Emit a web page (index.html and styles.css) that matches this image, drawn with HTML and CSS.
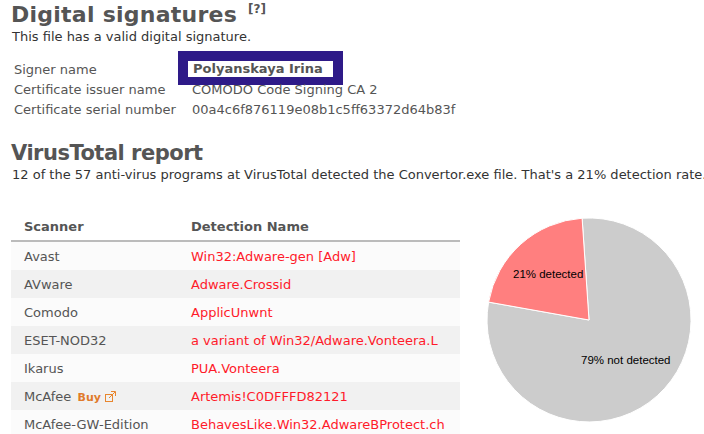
FILE: index.html
```html
<!DOCTYPE html>
<html lang="en">
<head>
    <meta charset="UTF-8">
    <title>Convertor.exe - Digital signatures</title>
    <link rel="stylesheet" href="styles.css">
</head>
<body>
    <div class="page">
        <h2 class="ds">Digital signatures <sup>[?]</sup></h2>
        <p class="lead">This file has a valid digital signature.</p>
        <table class="sig">
            <tr>
                <td class="label">Signer name</td>
                <td><span class="mark"><b>Polyanskaya Irina</b></span></td>
            </tr>
            <tr>
                <td class="label">Certificate issuer name</td>
                <td>COMODO Code Signing CA 2</td>
            </tr>
            <tr>
                <td class="label">Certificate serial number</td>
                <td>00a4c6f876119e08b1c5ff63372d64b83f</td>
            </tr>
        </table>

        <h2 class="vt">VirusTotal report</h2>
        <p class="lead nowrap">12 of the 57 anti-virus programs at VirusTotal detected the Convertor.exe file. That's a 21% detection rate.</p>

        <div class="report">
            <table class="scan">
                <thead>
                    <tr><th class="c1">Scanner</th><th>Detection Name</th></tr>
                </thead>
                <tbody>
                    <tr><td class="c1">Avast</td><td class="hit">Win32:Adware-gen [Adw]</td></tr>
                    <tr><td class="c1">AVware</td><td class="hit">Adware.Crossid</td></tr>
                    <tr><td class="c1">Comodo</td><td class="hit">ApplicUnwnt</td></tr>
                    <tr><td class="c1">ESET-NOD32</td><td class="hit">a variant of Win32/Adware.Vonteera.L</td></tr>
                    <tr><td class="c1">Ikarus</td><td class="hit">PUA.Vonteera</td></tr>
                    <tr>
                        <td class="c1">McAfee <a class="buy" href="#">Buy
                            <svg width="11" height="11" viewBox="0 0 11 11"><rect x="0.5" y="3.5" width="7" height="7" fill="none" stroke="#e8862e"/><path d="M4 7 L10 1 M6 0.5 H10.5 V5" fill="none" stroke="#e8862e"/></svg></a></td>
                        <td class="hit">Artemis!C0DFFFD82121</td>
                    </tr>
                    <tr><td class="c1">McAfee-GW-Edition</td><td class="hit">BehavesLike.Win32.AdwareBProtect.ch</td></tr>
                </tbody>
            </table>

            <svg class="pie" width="234" height="224" viewBox="0 0 234 224">
                <path d="M119,110 L112.1,8.2 A102,102 0 1,1 18.6,92.1 Z" fill="#cccccc" stroke="#ffffff" stroke-width="1"/>
                <path d="M119,110 L112.1,8.2 A102,102 0 0,0 18.6,92.1 Z" fill="#ff7f7f" stroke="#ffffff" stroke-width="1"/>
                <text x="43" y="68">21% detected</text>
                <text x="111" y="154">79% not detected</text>
            </svg>
        </div>
    </div>
</body>
</html>
```

FILE: styles.css
```css
html, body {
    margin: 0;
    overflow: hidden;
}
body {
    font-family: "DejaVu Sans", Verdana, sans-serif;
    font-size: 13px;
    color: #444;
    background: #fff;
}
.page {
    padding: 3px 0 0 11px;
}
h2 {
    font-size: 22px;
    line-height: 24px;
    color: #555;
    margin: 0;
}
.ds {
    letter-spacing: 0.25px;
}
h2 sup {
    font-size: 12px;
    line-height: 0;
    vertical-align: 9px;
    letter-spacing: 0;
    margin-left: 3px;
}
.lead {
    margin: 1px 0 0 1px;
    line-height: 18px;
    color: #333;
}
.nowrap {
    white-space: nowrap;
}
.sig {
    border-collapse: collapse;
    margin-top: 13px;
    color: #555;
}
.sig td {
    padding: 0;
    height: 20px;
}
.sig .label {
    width: 178px;
    padding-left: 3px;
}
.mark {
    display: inline-block;
    vertical-align: middle;
    box-sizing: border-box;
    width: 165px;
    height: 34px;
    border: 10px solid #2e1a88;
    border-bottom-width: 8px;
    margin: -8px 0 -6px -14px;
    padding: 0 0 0 5px;
    background: #fff;
    line-height: 16px;
}
.mark b {
    color: #555;
}
.vt {
    font-size: 21px;
    letter-spacing: -0.5px;
    margin-top: 22px;
}
.report {
    display: flex;
    align-items: flex-start;
    gap: 10px;
    margin-top: 29px;
}
.scan {
    width: 449px;
    border-collapse: collapse;
    color: #555;
}
.scan th {
    text-align: left;
    height: 27px;
    padding: 0;
    border-bottom: 2px solid #bbb;
}
.scan td {
    height: 28px;
    padding: 0;
}
.scan .c1 {
    width: 167px;
    padding-left: 13px;
}
.scan tbody tr:nth-child(odd) {
    background: #fbfbfb;
}
.scan tbody tr:nth-child(even) {
    background: #f1f1f1;
}
.hit {
    color: #ff1a2a;
}
.buy {
    color: #e07a2a;
    font-weight: bold;
    font-size: 11px;
    text-decoration: none;
    margin-left: 2px;
}
.buy svg {
    vertical-align: -1px;
}
.pie {
    margin-top: -3px;
}
.pie text {
    font-family: "Liberation Sans", Arial, sans-serif;
    font-size: 11.5px;
    fill: #000;
}
```
